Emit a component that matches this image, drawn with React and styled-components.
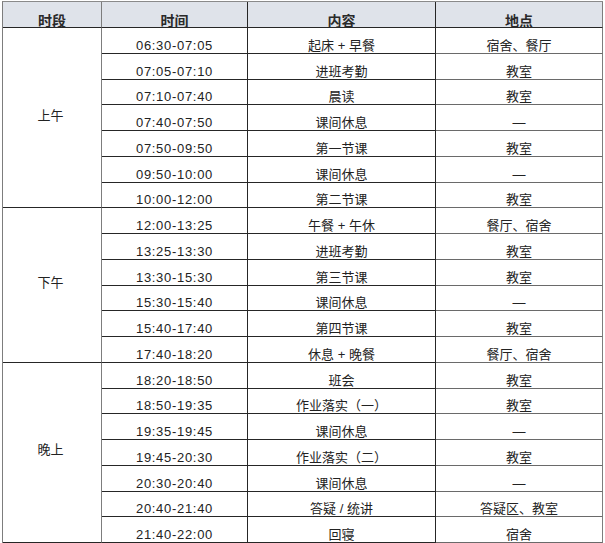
import React from "react";
import styled, { createGlobalStyle } from "styled-components";

const Global = createGlobalStyle`
  html, body { margin: 0; padding: 0; background: #fff; }
  body { font-family: "Liberation Sans", "Noto Sans CJK SC", sans-serif; color: #222; }
`;

const Grid = styled.div`
  display: grid;
  grid-template-columns: 99px 146px 188px 167px;
  grid-template-rows: 26px repeat(20, 25.75px);
  margin: 1px 0 0 2px;
  width: max-content;
  border-left: 1px solid #7d7d7d;
  border-top: 1px solid #8a8a8a;
`;

const Cell = styled.div`
  box-sizing: border-box;
  display: flex;
  justify-content: center;
  align-items: flex-end;
  font-size: 13px;
  line-height: 12px;
  padding-bottom: 1px;
  white-space: nowrap;
  border-bottom: 1px solid ${(p) => (p.$lastCol ? "#6a6a6a" : "#262626")};
  border-right: 1px solid ${(p) => (p.$first || p.$lastCol ? "#7d7d7d" : "#262626")};
`;

const HeadCell = styled(Cell)`
  background: #dfe3ea;
  font-weight: 700;
  font-size: 14px;
  color: #2a2a2a;
  border-bottom-color: #262626;
  padding-bottom: 0;
`;

const PeriodCell = styled(Cell)`
  align-items: center;
  padding: 0 3px 4px 0;
  line-height: 16px;
  grid-row: span ${(p) => p.$span};
  border-bottom-color: #262626;
  border-right-color: #7d7d7d;
`;

const TimeText = styled.span`
  letter-spacing: 0.7px;
`;

const sections = [
  {
    name: "上午",
    rows: [
      ["06:30-07:05", "起床 + 早餐", "宿舍、餐厅"],
      ["07:05-07:10", "进班考勤", "教室"],
      ["07:10-07:40", "晨读", "教室"],
      ["07:40-07:50", "课间休息", "—"],
      ["07:50-09:50", "第一节课", "教室"],
      ["09:50-10:00", "课间休息", "—"],
      ["10:00-12:00", "第二节课", "教室"],
    ],
  },
  {
    name: "下午",
    rows: [
      ["12:00-13:25", "午餐 + 午休", "餐厅、宿舍"],
      ["13:25-13:30", "进班考勤", "教室"],
      ["13:30-15:30", "第三节课", "教室"],
      ["15:30-15:40", "课间休息", "—"],
      ["15:40-17:40", "第四节课", "教室"],
      ["17:40-18:20", "休息 + 晚餐", "餐厅、宿舍"],
    ],
  },
  {
    name: "晚上",
    rows: [
      ["18:20-18:50", "班会", "教室"],
      ["18:50-19:35", "作业落实（一）", "教室"],
      ["19:35-19:45", "课间休息", "—"],
      ["19:45-20:30", "作业落实（二）", "教室"],
      ["20:30-20:40", "课间休息", "—"],
      ["20:40-21:40", "答疑 / 统讲", "答疑区、教室"],
      ["21:40-22:00", "回寝", "宿舍"],
    ],
  },
];

export default function App() {
  return (
    <>
      <Global />
      <Grid>
        <HeadCell $first>时段</HeadCell>
        <HeadCell>时间</HeadCell>
        <HeadCell>内容</HeadCell>
        <HeadCell $lastCol>地点</HeadCell>
        {sections.map((s) => (
          <React.Fragment key={s.name}>
            <PeriodCell $span={s.rows.length}>{s.name}</PeriodCell>
            {s.rows.map((r, i) => (
              <React.Fragment key={i}>
                <Cell>
                  <TimeText>{r[0]}</TimeText>
                </Cell>
                <Cell>{r[1]}</Cell>
                <Cell $lastCol>{r[2]}</Cell>
              </React.Fragment>
            ))}
          </React.Fragment>
        ))}
      </Grid>
    </>
  );
}
